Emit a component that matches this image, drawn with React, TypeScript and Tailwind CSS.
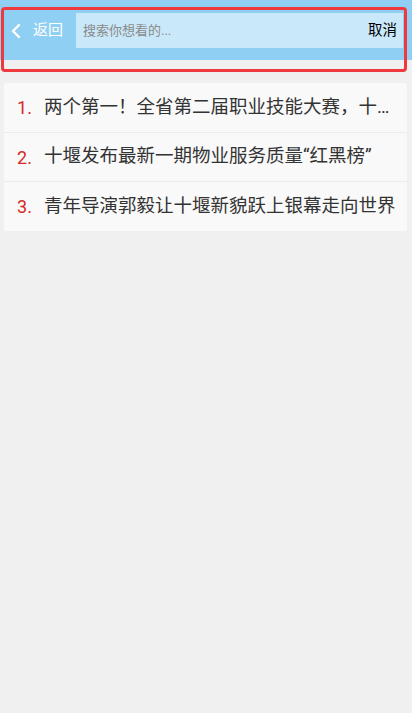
import React from "react";

const items = [
  "两个第一！全省第二届职业技能大赛，十堰代表队获佳绩",
  "十堰发布最新一期物业服务质量“红黑榜”",
  "青年导演郭毅让十堰新貌跃上银幕走向世界",
];

const heights = ["h-[49px]", "h-[49px]", "h-[50px]"];

export default function App() {
  return (
    <div
      className="relative w-[412px] h-[713px] bg-[#f0f0f0] overflow-hidden"
      style={{ fontFamily: 'Roboto, "Noto Sans CJK SC", "Noto Sans", sans-serif' }}
    >
      <div className="h-[60px] bg-[#8fcff3] flex items-start pt-[13px]">
        <div className="w-[76px] h-[35px] flex items-center text-white">
          <svg width="12" height="16" viewBox="0 0 12 16" className="ml-[10px]">
            <path d="M9 2 L3 8 L9 14" fill="none" stroke="white" strokeWidth="2.4" strokeLinecap="round" strokeLinejoin="round" />
          </svg>
          <span className="ml-[11px] text-[15px] leading-none">返回</span>
        </div>
        <div className="flex-1 mr-[9px] h-[35px] bg-[#c9e8f9] flex items-center pl-[7px] pr-[6px]">
          <span className="flex-1 text-[13px] text-[#8a8a8a]">搜索你想看的...</span>
          <span className="text-[14.5px] text-black">取消</span>
        </div>
      </div>

      <div className="mx-[4px] mt-[23px] w-[403px] bg-[#f9f9f9] rounded-[3px]">
        {items.map((t, i) => (
          <div
            key={i}
            className={
              heights[i] +
              " flex items-center pl-[13px] pr-[4px] " +
              (i > 0 ? "border-t border-[#ececec]" : "")
            }
          >
            <span className="w-[27px] shrink-0 text-[18px] text-[#d42a26]">{i + 1}.</span>
            <span className="min-w-0 text-[18.5px] text-[#333] whitespace-nowrap overflow-hidden text-ellipsis">{t}</span>
          </div>
        ))}
      </div>

      <div className="absolute left-[1px] top-[7px] w-[406px] h-[65px] border-[3px] border-[#ee3a3e] rounded-[4px] pointer-events-none" />
    </div>
  );
}
